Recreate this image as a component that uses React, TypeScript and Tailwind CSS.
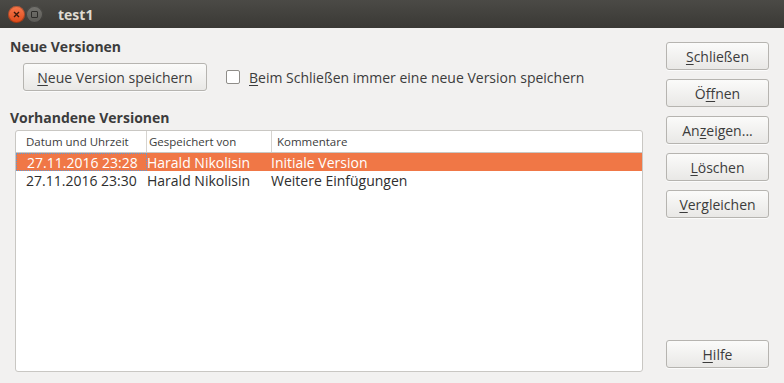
import React from 'react';

const font = { fontFamily: '"Open Sans", "Noto Sans", sans-serif' };

function Btn({ label, u, className = '' }: { label: string; u: number; className?: string }) {
  return (
    <button
      className={`h-[28px] rounded-[3px] border border-[#b6b4b0] bg-gradient-to-b from-[#fbfbfa] to-[#e9e8e6] text-[14px] text-[#3c3c3c] shadow-[0_1px_0_rgba(255,255,255,0.7)] ${className}`}
    >
      {label.slice(0, u)}
      <span className="underline underline-offset-2">{label.slice(u, u + 1)}</span>
      {label.slice(u + 1)}
    </button>
  );
}

function ÖffnenBtn() {
  return (
    <button className="h-[28px] w-full rounded-[3px] border border-[#b6b4b0] bg-gradient-to-b from-[#fbfbfa] to-[#e9e8e6] text-[14px] text-[#3c3c3c]">
      Ö<span className="underline underline-offset-2">ff</span>nen
    </button>
  );
}

const rows = [
  { date: '27.11.2016 23:28', by: 'Harald Nikolisin', note: 'Initiale Version', sel: true },
  { date: '27.11.2016 23:30', by: 'Harald Nikolisin', note: 'Weitere Einfügungen', sel: false },
];

export default function App() {
  return (
    <div className="flex h-[383px] w-[784px] flex-col overflow-hidden bg-[#f2f1f0] text-[#3c3c3c]" style={font}>
      {/* title bar */}
      <div className="flex h-[28px] items-center bg-gradient-to-b from-[#4b4a46] to-[#3a3935] pl-[8px]">
        <div className="flex h-[17px] w-[17px] items-center justify-center rounded-full bg-gradient-to-b from-[#f7794c] to-[#dd4814] shadow-[inset_0_0_0_1px_rgba(0,0,0,0.25)]">
          <svg width="7" height="7" viewBox="0 0 7 7">
            <path d="M1 1L6 6M6 1L1 6" stroke="#3a1a0c" strokeWidth="1.4" />
          </svg>
        </div>
        <div className="ml-[1px] flex h-[17px] w-[17px] items-center justify-center rounded-full bg-gradient-to-b from-[#75746f] to-[#5a5955] shadow-[inset_0_0_0_1px_rgba(0,0,0,0.35)]">
          <div className="h-[7px] w-[7px] rounded-[1px] border-[1.5px] border-[#2e2d2a]" />
        </div>
        <span className="ml-[15px] text-[14px] font-bold text-[#dfdbd2]">test1</span>
      </div>

      <div className="flex flex-1 pb-[11px] pl-[10px] pr-[15px]">
        {/* left */}
        <div className="flex flex-1 flex-col">
          <div className="mt-[10px] text-[14px] font-bold leading-[17px]">Neue Versionen</div>
          <div className="mt-[8px] flex items-center pl-[13px]">
            <Btn label="Neue Version speichern" u={0} className="w-[184px]" />
            <div className="ml-[19px] h-[14px] w-[14px] rounded-[2px] border border-[#8f8d89] bg-white" />
            <span className="ml-[9px] text-[14px]">
              <span className="underline underline-offset-2">B</span>eim Schließen immer eine neue Version speichern
            </span>
          </div>
          <div className="mt-[18px] text-[14px] font-bold leading-[17px]">Vorhandene Versionen</div>
          <div className="ml-[5px] mt-[4px] flex-1 rounded-[3px] border border-[#c9c7c3] bg-white">
            <div className="flex h-[22px] items-center border-b border-[#c9c7c3] text-[11.5px] text-[#3c3c3c]">
              <div className="w-[130px] pl-[10px]">Datum und Uhrzeit</div>
              <div className="h-full w-px bg-[#d6d4d0]" />
              <div className="w-[124px] pl-[2px]">Gespeichert von</div>
              <div className="h-full w-px bg-[#d6d4d0]" />
              <div className="pl-[5px]">Kommentare</div>
            </div>
            {rows.map((r) => (
              <div
                key={r.date}
                className={`flex h-[18px] items-center text-[14px] ${r.sel ? 'bg-[#f07746] text-white' : 'text-[#2e2e2e]'}`}
              >
                <div className={`flex h-full w-[131px] items-center pl-[10px] ${r.sel ? 'border border-dotted border-[#5a9bd8]' : ''}`}>
                  {r.date}
                </div>
                <div className="w-[124px]">{r.by}</div>
                <div>{r.note}</div>
              </div>
            ))}
          </div>
        </div>

        {/* right buttons */}
        <div className="ml-[23px] flex w-[103px] flex-col gap-[9px] pt-[14px] pb-[4px]">
          <Btn label="Schließen" u={0} className="w-full" />
          <ÖffnenBtn />
          <Btn label="Anzeigen..." u={2} className="w-full" />
          <Btn label="Löschen" u={0} className="w-full" />
          <Btn label="Vergleichen" u={0} className="w-full" />
          <div className="flex-1" />
          <Btn label="Hilfe" u={0} className="w-full" />
        </div>
      </div>
    </div>
  );
}
